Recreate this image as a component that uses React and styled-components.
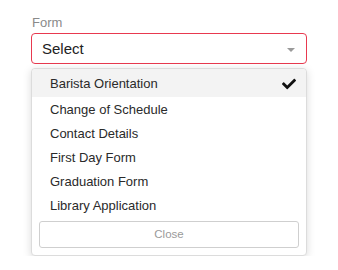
import styled, { createGlobalStyle } from "styled-components";
import { FaCheck } from "react-icons/fa";

const Global = createGlobalStyle`
  * {
    box-sizing: border-box;
  }
  body {
    margin: 0;
    background: #fff;
    font-family: "Liberation Sans", Arial, sans-serif;
  }
`

const Page = styled.div`
  padding: 13px 31px 0 31px;
  width: 338px;
`

const Label = styled.div`
  font-size: 13px;
  color: #8a8a8a;
  height: 20px;
  line-height: 20px;
  padding-left: 1px;
`

const SelectBox = styled.div`
  height: 31px;
  border: 1px solid #e8394f;
  border-radius: 4px;
  display: flex;
  align-items: center;
  justify-content: space-between;
  padding: 0 10px 0 10px;
  font-size: 15px;
  color: #222;
`

const Caret = styled.span`
  width: 0;
  height: 0;
  border-left: 4px solid transparent;
  border-right: 4px solid transparent;
  border-top: 4px solid #9a9a9a;
  margin-top: 3px;
  margin-right: 1px;
`

const Menu = styled.div`
  margin-top: 4px;
  border: 1px solid #dcdcdc;
  border-radius: 4px;
  background: #fff;
  box-shadow: 0 2px 8px rgba(0, 0, 0, 0.15);
  padding-bottom: 7px;
`

const Item = styled.div`
  height: ${p => (p.first ? "28px" : "24.2px")};
  display: flex;
  align-items: center;
  justify-content: space-between;
  padding: ${p => (p.first ? "1px" : "0")} 10px 0 18px;
  font-size: 13px;
  color: #2a2a2a;
  background: ${p => (p.active ? "#f3f3f3" : "transparent")};
  border-radius: ${p => (p.first ? "4px 4px 0 0" : "0")};

  svg {
    color: #111;
  }
`

const Close = styled.div`
  margin: 3px 7px 0 7px;
  height: 27px;
  border: 1px solid #cfcfcf;
  border-radius: 3px;
  display: flex;
  align-items: center;
  justify-content: center;
  font-size: 11.5px;
  color: #9a9a9a;
`

const forms = [
  "Barista Orientation",
  "Change of Schedule",
  "Contact Details",
  "First Day Form",
  "Graduation Form",
  "Library Application",
]

const App = () => {
  return (
    <Page>
      <Global />
      <Label>Form</Label>
      <SelectBox>
        <span>Select</span>
        <Caret />
      </SelectBox>
      <Menu>
        {forms.map((f, idx) => (
          <Item key={idx} first={idx === 0} active={idx === 0}>
            <span>{f}</span>
            {idx === 0 && <FaCheck size={14} />}
          </Item>
        ))}
        <Close>Close</Close>
      </Menu>
    </Page>
  )
}

export default App
